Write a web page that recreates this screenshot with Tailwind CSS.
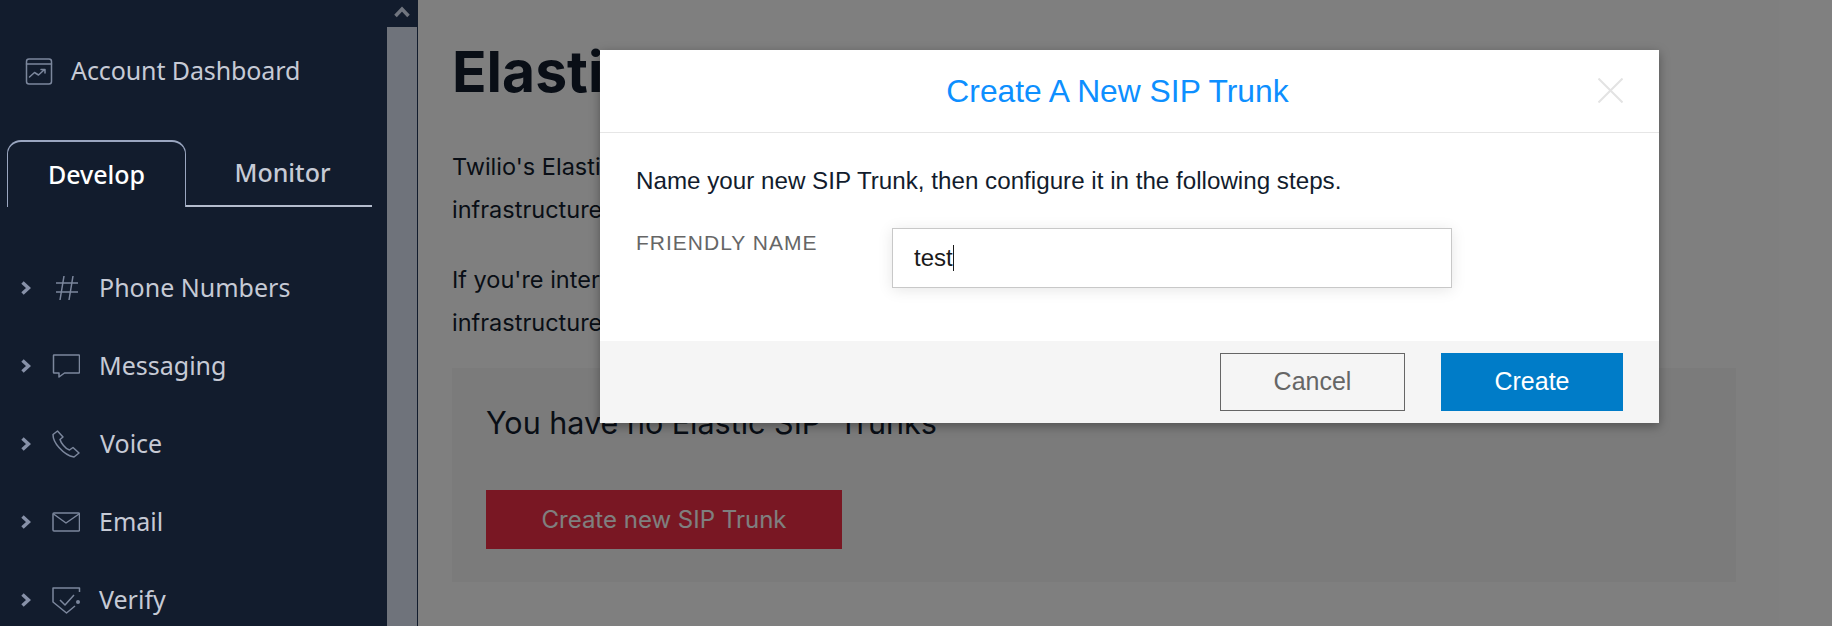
<!DOCTYPE html>
<html lang="en">
<head>
  <meta charset="UTF-8">
  <title>Elastic SIP Trunks</title>
  <script src="https://cdn.jsdelivr.net/npm/@tailwindcss/browser@4"></script>
</head>
<body class="h-[626px] w-[1832px] overflow-hidden relative bg-white flex font-['Inter',sans-serif]">

  <!-- Sidebar -->
  <aside class="w-[387px] h-full shrink-0 bg-[#121c2d] font-['Noto_Sans',sans-serif] text-[#c6cad5] overflow-hidden">
    <div class="h-[140px] pt-[49px] pl-[25px]">
      <div class="flex items-center h-[44px] gap-[16px] text-[25px] tracking-[-0.1px]">
        <svg class="w-[30px] h-[30px]" viewBox="0 0 30 30" fill="none" stroke="#7c879d" stroke-width="1.500" stroke-linecap="round" stroke-linejoin="round">
          <rect x="1.500" y="3" width="25" height="25" rx="2.500"/>
          <path d="M1.500 8h25"/>
          <path d="M4.500 21l5-4.500 4 2.500 6-5.500M16 13.500h4v3.500"/>
        </svg>
        <span>Account Dashboard</span>
      </div>
    </div>

    <div class="flex h-[67px] pl-[7px] w-[372px]">
      <div class="w-[179px] h-[67px] border-x border-t-2 border-[#9aa6c0] border-b-0 rounded-t-[14px] flex items-center justify-center text-[25px] font-medium text-white">Develop</div>
      <div class="flex-1 h-[67px] border-b-2 border-[#b4bccd] flex items-center justify-center pl-[7px] text-[25px] font-medium text-[#c6cad5]">Monitor</div>
    </div>

    <ul class="pt-[42px] text-[25px] flex flex-col">
      <li class="h-[78px] flex items-center">
        <svg class="ml-[21px] w-[10px] h-[14px]" viewBox="0 0 10 14" fill="none" stroke="#8791a8" stroke-width="3.500"><path d="M1.500 1.500L7.500 7l-6 5.500"/></svg>
        <svg class="ml-[24px] w-[24px] h-[28px]" viewBox="0 0 24 28" fill="none" stroke="#7c879d" stroke-width="1.500"><path d="M9 2L5 26M18 2l-4 24M1 9h22M1 18h22"/></svg>
        <span class="ml-[20px]">Phone Numbers</span>
      </li>
      <li class="h-[78px] flex items-center">
        <svg class="ml-[21px] w-[10px] h-[14px]" viewBox="0 0 10 14" fill="none" stroke="#8791a8" stroke-width="3.500"><path d="M1.500 1.500L7.500 7l-6 5.500"/></svg>
        <svg class="ml-[21px] w-[28px] h-[24px]" viewBox="0 0 28 24" fill="none" stroke="#7c879d" stroke-width="1.500" stroke-linejoin="round"><path d="M2 1h25a.5.5 0 0 1 .5.5v17a.5.5 0 0 1-.5.5H12.500L7 23v-4H2a.5.5 0 0 1-.5-.5v-17A.5.5 0 0 1 2 1z"/></svg>
        <span class="ml-[19px]">Messaging</span>
      </li>
      <li class="h-[78px] flex items-center">
        <svg class="ml-[21px] w-[10px] h-[14px]" viewBox="0 0 10 14" fill="none" stroke="#8791a8" stroke-width="3.500"><path d="M1.500 1.500L7.500 7l-6 5.500"/></svg>
        <svg class="ml-[21px] w-[28px] h-[28px]" viewBox="0 0 28 28" fill="none" stroke="#7c879d" stroke-width="1.500" stroke-linejoin="round"><path d="M5.500 1L1 4.500c0 4 2 8.500 6 13s9 8.500 15 9.500l5-4-6-5.500-3.500 2.500c-2-.5-4-2-6-4.500s-3-4-3.500-6L11 7z"/></svg>
        <span class="ml-[20px]">Voice</span>
      </li>
      <li class="h-[78px] flex items-center">
        <svg class="ml-[21px] w-[10px] h-[14px]" viewBox="0 0 10 14" fill="none" stroke="#8791a8" stroke-width="3.500"><path d="M1.500 1.500L7.500 7l-6 5.500"/></svg>
        <svg class="ml-[21px] w-[28px] h-[20px]" viewBox="0 0 28 20" fill="none" stroke="#7c879d" stroke-width="1.500" stroke-linejoin="round"><rect x="1" y="1" width="26.500" height="18" rx="1"/><path d="M1.500 2L14 11 27 2"/></svg>
        <span class="ml-[19px]">Email</span>
      </li>
      <li class="h-[78px] flex items-center">
        <svg class="ml-[21px] w-[10px] h-[14px]" viewBox="0 0 10 14" fill="none" stroke="#8791a8" stroke-width="3.500"><path d="M1.500 1.500L7.500 7l-6 5.500"/></svg>
        <svg class="ml-[21px] w-[29px] h-[27px]" viewBox="0 0 29 27" fill="none" stroke="#7c879d" stroke-width="1.500" stroke-linejoin="round"><path d="M27.500 5V1H1v14l13.500 11L23 19"/><path d="M8 13l5 5L22 8"/><circle cx="26" cy="15" r="2" fill="#7c879d" stroke="none"/></svg>
        <span class="ml-[18px]">Verify</span>
      </li>
    </ul>
  </aside>

  <!-- Sidebar scrollbar -->
  <div class="w-[30px] h-full shrink-0 bg-[#6f737b]">
    <div class="h-[27px] bg-[#121c2d] flex items-center justify-center">
      <svg class="w-[16px] h-[12px] -mt-[3px]" viewBox="0 0 16 12" fill="none" stroke="#70757f" stroke-width="3.500"><path d="M1.500 10L8 3l6.500 7"/></svg>
    </div>
  </div>
  <div class="w-px h-full shrink-0 bg-[#121c2d]"></div>

  <!-- Page content -->
  <main class="flex-1 pl-[34px] pt-[39px] text-[#121c2d]">
    <h1 class="text-[57px] leading-[66px] font-bold">Elastic</h1>
    <p class="mt-[41px] w-[1100px] text-[23.500px] leading-[42.500px]">Twilio's Elastic SIP Trunking connects your existing<br>infrastructure to the public telephone network.</p>
    <p class="mt-[28px] w-[1100px] text-[23.500px] leading-[42.500px]">If you're interested in connecting your voice<br>infrastructure, create a trunk below.</p>
    <section class="mt-[24px] w-[1284px] h-[214px] bg-[#f6f6f6] pl-[34px] pt-[35px]">
      <h2 class="text-[30.500px] leading-[40px]">You have no Elastic SIP&nbsp; Trunks</h2>
      <button class="mt-[47px] w-[356px] h-[59px] bg-[#f22f46] text-white text-[24px]">Create new SIP Trunk</button>
    </section>
  </main>

  <!-- Dim layer over the page -->
  <div class="absolute left-[418px] top-0 right-0 bottom-0 bg-black/50"></div>

  <!-- Modal -->
  <div class="absolute left-[600px] top-[50px] w-[1059px] h-[373px] bg-white flex flex-col shadow-[0_3px_10px_rgba(0,0,0,0.35)] font-['Liberation_Sans',sans-serif]">
    <header class="h-[83px] shrink-0 border-b border-[#e6e6e6] flex items-center justify-center relative pr-[24px] pt-[1px]">
      <h3 class="text-[31.800px] text-[#0d8fff]">Create A New SIP Trunk</h3>
      <svg class="absolute left-[998px] top-[28px] w-[25px] h-[25px]" viewBox="0 0 25 25" fill="none" stroke="#e3e3e3" stroke-width="2"><path d="M0.500 0.500l24 24M24.500 0.500l-24 24"/></svg>
    </header>
    <div class="flex-1 px-[36px] pt-[33px] text-[#121c2d]">
      <p class="text-[24.200px] leading-[30px]">Name your new SIP Trunk, then configure it in the following steps.</p>
      <div class="flex mt-[32px]">
        <label class="w-[256px] pt-[3px] text-[21px] leading-[24px] tracking-[1px] text-[#666666]">FRIENDLY NAME</label>
        <div class="w-[560px] h-[60px] border border-[#c8c8c8] bg-white shadow-[0_2px_14px_rgba(0,0,0,0.1)] flex items-center pl-[21px] text-[24px] text-[#1a1a1a]">test<span class="w-px h-[26px] bg-[#1a1a1a]"></span></div>
      </div>
    </div>
    <footer class="h-[82px] shrink-0 bg-[#f5f5f5] flex items-start justify-end gap-[36px] pt-[12px] pr-[36px] text-[25px]">
      <button class="w-[185px] h-[58px] border border-[#666666] text-[#666666]">Cancel</button>
      <button class="w-[182px] h-[58px] bg-[#007cc8] text-white">Create</button>
    </footer>
  </div>
</body>
</html>
